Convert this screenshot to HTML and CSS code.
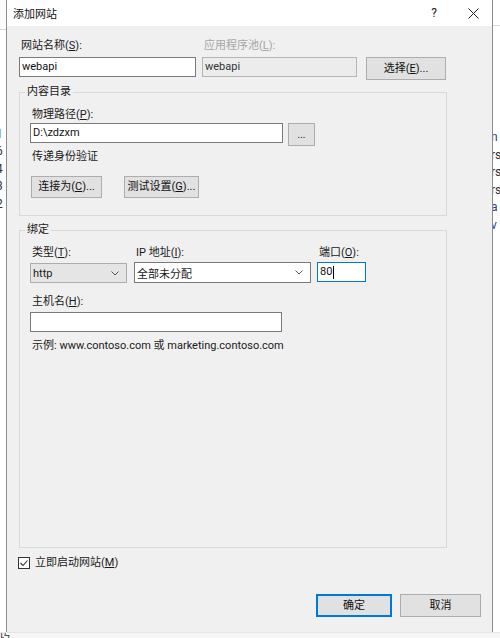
FILE: index.html
```html
<!DOCTYPE html>
<html lang="zh-CN">
<head>
<meta charset="utf-8">
<title>添加网站</title>
<link rel="stylesheet" href="styles.css">
</head>
<body>
<div class="screen">
  <div class="main-row">
    <div class="side side-left">
      <div class="side-band"></div>
      <div class="side-frags left-frags">
        <span>I</span><span>1</span><span>6</span><span>4</span><span>3</span><span>2</span>
      </div>
    </div>
    <div class="dialog">
      <div class="titlebar">
        <span class="title">添加网站</span>
        <span class="help">?</span>
        <span class="close">
          <svg width="11" height="11" viewBox="0 0 11 11"><path d="M0.5 0.5 L10.5 10.5 M10.5 0.5 L0.5 10.5" stroke="#222" stroke-width="1" fill="none"/></svg>
        </span>
      </div>
      <div class="body">
        <div class="site-grid">
          <div class="lbl">网站名称(<u>S</u>):</div>
          <div class="lbl lbl-disabled">应用程序池(<u>L</u>):</div>
          <div></div>
          <div class="input input-name">webapi</div>
          <div class="input input-disabled">webapi</div>
          <button class="btn btn-select">选择(<u>E</u>)...</button>
        </div>

        <fieldset class="group group-content">
          <legend>内容目录</legend>
          <div class="lbl">物理路径(<u>P</u>):</div>
          <div class="path-row">
            <div class="input input-path">D:\zdzxm</div>
            <button class="btn btn-browse">...</button>
          </div>
          <div class="lbl lbl-auth">传递身份验证</div>
          <div class="auth-row">
            <button class="btn btn-connect">连接为(<u>C</u>)...</button>
            <button class="btn btn-test">测试设置(<u>G</u>)...</button>
          </div>
        </fieldset>

        <fieldset class="group group-binding">
          <legend>绑定</legend>
          <div class="bind-grid">
            <div class="lbl">类型(<u>T</u>):</div>
            <div class="lbl">IP 地址(<u>I</u>):</div>
            <div class="lbl">端口(<u>O</u>):</div>
            <div class="select select-type">
              <span>http</span>
              <svg width="8" height="5" viewBox="0 0 8 5"><path d="M0.5 0.5 L4 4 L7.5 0.5" stroke="#555" stroke-width="1" fill="none"/></svg>
            </div>
            <div class="select select-ip">
              <span>全部未分配</span>
              <svg width="8" height="5" viewBox="0 0 8 5"><path d="M0.5 0.5 L4 4 L7.5 0.5" stroke="#555" stroke-width="1" fill="none"/></svg>
            </div>
            <div class="input input-port">80<span class="caret"></span></div>
          </div>
          <div class="lbl lbl-host">主机名(<u>H</u>):</div>
          <div class="input input-host"></div>
          <div class="lbl lbl-example">示例: www.contoso.com 或 marketing.contoso.com</div>
        </fieldset>

        <div class="check-row">
          <span class="checkbox">
            <svg width="12" height="12" viewBox="0 0 12 12"><rect x="0.5" y="0.5" width="11" height="11" fill="#fff" stroke="#333"/><path d="M2.5 6 L5 8.5 L9.5 3.5" stroke="#333" stroke-width="1.1" fill="none"/></svg>
          </span>
          <span class="lbl check-lbl">立即启动网站(<u>M</u>)</span>
        </div>

        <div class="footer">
          <button class="btn btn-ok">确定</button>
          <button class="btn btn-cancel">取消</button>
        </div>
      </div>
    </div>
    <div class="side side-right">
      <div class="side-band band-right"></div>
      <div class="side-frags right-frags">
        <span class="blue">n</span><span>rs</span><span>rs</span><span>rs</span><span class="blue">a</span><span class="blue">v</span>
      </div>
    </div>
  </div>
  <div class="bottom-strip"><span class="bottom-frag">巧</span></div>
</div>
</body>
</html>
```

FILE: styles.css
```css
* { box-sizing: border-box; }

html, body {
  margin: 0;
  padding: 0;
  width: 500px;
  height: 638px;
  overflow: hidden;
  background: #ffffff;
  font-family: Roboto, "Noto Sans CJK SC", sans-serif;
  font-size: 11px;
  color: #1a1a1a;
}

u { text-decoration: underline; text-underline-offset: 1px; }

.screen {
  display: flex;
  flex-direction: column;
  width: 500px;
  height: 638px;
}

.main-row {
  display: flex;
  height: 632px;
}

.side {
  background: #ffffff;
  overflow: hidden;
  display: flex;
  flex-direction: column;
}

.side-left { width: 6px; }
.side-right { width: 7px; }

.side-band {
  height: 30px;
  border-bottom: 1px solid #d6d6d6;
  background: #fbfbfb;
  flex: none;
}

.band-right {
  background: #ffffff;
  border-bottom: 1px solid #d9d9d9;
  height: 26px;
}

.side-frags {
  display: flex;
  flex-direction: column;
  line-height: 17.5px;
  font-size: 12px;
  color: #333;
  white-space: nowrap;
}

.left-frags {
  padding-top: 78px;
  margin-left: -4px;
}

.right-frags {
  padding-top: 103px;
  margin-left: -2px;
}

.right-frags .blue { color: #1f3f8f; }

.dialog {
  width: 487px;
  height: 632px;
  display: flex;
  flex-direction: column;
  background: #f0f0f0;
  border-left: 1px solid #8c8c8c;
  border-right: 1px solid #8c8c8c;
}

.titlebar {
  height: 26px;
  flex: none;
  background: #ffffff;
  display: flex;
  align-items: center;
}

.title {
  flex: 1;
  padding-left: 6px;
  color: #111;
}

.help {
  width: 20px;
  text-align: center;
  font-size: 12px;
  color: #222;
}

.close {
  width: 20px;
  margin-left: 19px;
  margin-right: 9px;
  display: flex;
  justify-content: center;
  align-items: center;
}

.body {
  flex: 1;
  display: flex;
  flex-direction: column;
  padding: 12px 11px 15px 12px;
}

.lbl {
  line-height: 16px;
  height: 16px;
  padding-left: 2px;
  white-space: nowrap;
}

.lbl-disabled { color: #a6a6a6; }

.input {
  height: 20px;
  background: #ffffff;
  border: 1px solid #7a7a7a;
  line-height: 18px;
  padding-left: 2px;
  white-space: nowrap;
  color: #111;
}

.input-disabled {
  background: #ececec;
  border-color: #b5b5b5;
  color: #333;
}

.btn {
  font: inherit;
  color: #111;
  background: #e1e1e1;
  border: 1px solid #adadad;
  border-radius: 0;
  padding: 0;
  margin: 0;
  height: 22px;
  line-height: 18px;
  text-align: center;
  white-space: nowrap;
}

/* top row */
.site-grid {
  display: grid;
  grid-template-columns: 177px 155px 83px;
  column-gap: 6px;
  row-gap: 3px;
  align-items: start;
}

.btn-select {
  justify-self: end;
  width: 80px;
  height: 23px;
}

/* groups */
.group {
  width: 428px;
  margin: 0;
  border: 1px solid #d9d9d9;
  padding: 7px 10px 17px 10px;
  min-width: 0;
}

.group legend {
  padding: 0 2px;
  margin-left: -5px;
  line-height: 16px;
  height: 16px;
}

.group-content { margin-top: 4px; }

.path-row {
  display: flex;
  align-items: flex-start;
  gap: 5px;
}

.input-path { width: 253px; }

.btn-browse {
  width: 27px;
  height: 23px;
  line-height: 16px;
  font-size: 10px;
}

.lbl-auth { margin-top: 3px; }

.auth-row {
  display: flex;
  gap: 22px;
  margin-top: 11px;
  padding-left: 1px;
}

.btn-connect { width: 71px; }
.btn-test { width: 75px; }

.group-binding {
  margin-top: 6px;
  flex: 1;
}

.bind-grid {
  display: grid;
  grid-template-columns: 104px 183px 49px;
  row-gap: 1px;
  align-items: start;
}

.select {
  height: 21px;
  display: flex;
  align-items: center;
  justify-content: space-between;
  padding: 0 7px 0 2px;
  border: 1px solid #7a7a7a;
  background: #ffffff;
}

.select-type {
  width: 97px;
  background: #e5e5e5;
  border-color: #adadad;
  padding-left: 2px;
  margin-top: 1px;
  height: 20px;
}

.select-ip { width: 177px; }

.input-port {
  width: 49px;
  border-color: #0078d7;
  display: flex;
  align-items: center;
}

.caret {
  display: inline-block;
  width: 1px;
  height: 13px;
  background: #000;
  margin-left: 1px;
}

.lbl-host { margin-top: 11px; }

.input-host {
  width: 252px;
  margin-top: 2px;
}

.lbl-example { margin-top: 6px; }

/* bottom */
.check-row {
  display: flex;
  align-items: center;
  height: 16px;
  margin-top: 7px;
  margin-left: -1px;
}

.checkbox {
  display: flex;
  width: 12px;
  height: 12px;
}

.check-lbl { margin-left: 3px; }

.footer {
  display: flex;
  justify-content: flex-end;
  gap: 8px;
  margin-top: 23px;
}

.btn-ok {
  width: 76px;
  height: 23px;
  border: 2px solid #0078d7;
  line-height: 17px;
}

.btn-cancel {
  width: 81px;
  height: 23px;
}

.bottom-strip {
  height: 6px;
  background: #f6f6f6;
  overflow: hidden;
  border-top: 1px solid #e6e6e6;
}

.bottom-frag {
  display: block;
  font-size: 11px;
  line-height: 11px;
  color: #333;
  margin-left: -1px;
  margin-top: -2px;
}
```
